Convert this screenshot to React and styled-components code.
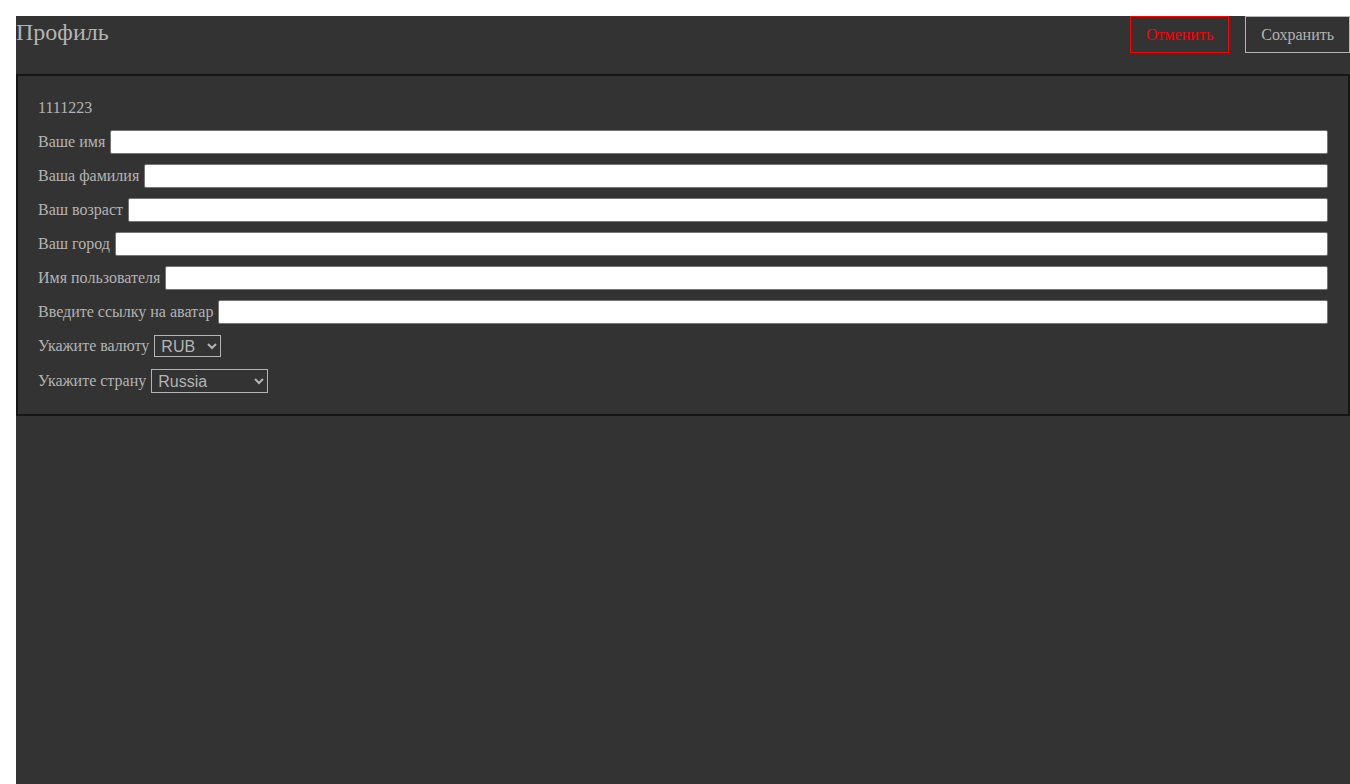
import React from 'react';
import styled, {createGlobalStyle} from "styled-components";

const GlobalStyle = createGlobalStyle`
body {
margin: 0;
background: #fff;
font-family: "Liberation Serif", "Times New Roman", serif;
overflow: hidden;
}
#root {
padding: 16px 0 0 16px;
}
`

const fields = [
    'Ваше имя',
    'Ваша фамилия',
    'Ваш возраст',
    'Ваш город',
    'Имя пользователя',
    'Введите ссылку на аватар',
]

const App = () => {
    return (
        <>
            <GlobalStyle/>
            <Page>
                <Header>
                    <Title>Профиль</Title>
                    <Actions>
                        <Button danger>Отменить</Button>
                        <Button>Сохранить</Button>
                    </Actions>
                </Header>
                <Card>
                    <Row><Text>1111223</Text></Row>
                    {fields.map(label => (
                        <Row key={label}>
                            <Text>{label}</Text>
                            <Input type="text"/>
                        </Row>
                    ))}
                    <Row>
                        <Text>Укажите валюту</Text>
                        <Select width={67} height={22} defaultValue="RUB">
                            <option>RUB</option>
                            <option>EUR</option>
                            <option>USD</option>
                        </Select>
                    </Row>
                    <Row>
                        <Text>Укажите страну</Text>
                        <Select width={117} height={24} spaced defaultValue="Russia">
                            <option>Russia</option>
                            <option>Belarus</option>
                            <option>Ukraine</option>
                            <option>Kazakhstan</option>
                            <option>Armenia</option>
                        </Select>
                    </Row>
                </Card>
            </Page>
        </>
    );
};

const Page = styled.div`
width: calc(100vw - 16px);
min-height: calc(100vh - 16px);
background: #333333;
color: #b4b4b4;
`
const Header = styled.div`
display: flex;
justify-content: space-between;
align-items: flex-start;
height: 58px;
`
const Title = styled.div`
font-size: 24px;
line-height: 32px;
color: #b4b4b4;
`
const Actions = styled.div`
display: flex;
gap: 16px;
`
const Button = styled.button`
height: 37px;
padding: 0 15px;
background: transparent;
font-family: "Liberation Serif", "Times New Roman", serif;
font-size: 16px;
border: 1px solid ${({danger}) => danger ? '#ff0000' : '#b4b4b4'};
color: ${({danger}) => danger ? '#ff0000' : '#b4b4b4'};
cursor: pointer;
`
const Card = styled.div`
border: 2px solid #161616;
padding: 20px;
display: flex;
flex-direction: column;
gap: 10px;
`
const Row = styled.div`
display: flex;
align-items: center;
gap: 5px;
min-height: 24px;
`
const Text = styled.span`
font-size: 16px;
white-space: nowrap;
`
const Input = styled.input`
flex: 1;
height: 24px;
box-sizing: border-box;
border: 1px solid #767676;
border-radius: 2px;
background: #fff;
padding: 1px 2px;
`
const Select = styled.select`
width: ${({width}) => width}px;
height: ${({height}) => height}px;
margin: ${({spaced}) => spaced ? '1px 0' : '0'};
box-sizing: border-box;
background: #333333;
color: #b4b4b4;
border: 1px solid #b4b4b4;
font-family: "Liberation Sans", Arial, sans-serif;
font-size: 16px;
padding: 0 2px;
`

export default App;
